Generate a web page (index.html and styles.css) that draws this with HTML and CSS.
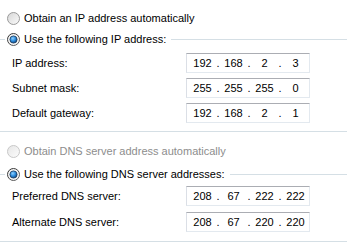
FILE: index.html
```html
<!DOCTYPE html>
<html>
<head>
<meta charset="utf-8">
<link rel="stylesheet" href="styles.css">
</head>
<body>
<svg width="0" height="0" class="defs">
  <defs>
    <linearGradient id="off" x1="0" y1="0" x2="1" y2="1">
      <stop offset="0" stop-color="#d6d6d6"/>
      <stop offset="1" stop-color="#fbfbfb"/>
    </linearGradient>
    <linearGradient id="offdis" x1="0" y1="0" x2="1" y2="1">
      <stop offset="0" stop-color="#e6e6e6"/>
      <stop offset="1" stop-color="#fcfcfc"/>
    </linearGradient>
    <radialGradient id="dot" cx="0.4" cy="0.35" r="0.7">
      <stop offset="0" stop-color="#8fd0ff"/>
      <stop offset="0.5" stop-color="#2f8fe0"/>
      <stop offset="1" stop-color="#0b3f78"/>
    </radialGradient>
    <linearGradient id="ring" x1="0" y1="0" x2="1" y2="1">
      <stop offset="0" stop-color="#2a2a2a"/>
      <stop offset="1" stop-color="#6a6a6a"/>
    </linearGradient>
  </defs>
</svg>
<div class="panel">
  <div class="opt">
    <svg class="radio" viewBox="0 0 13 13"><circle cx="6.5" cy="6.5" r="6" fill="url(#off)" stroke="#9a9a9a"/></svg>
    <span>Obtain an IP address automatically</span>
  </div>
  <div class="opt legend">
    <span class="lead"></span>
    <svg class="radio" viewBox="0 0 13 13"><circle cx="6.5" cy="6.5" r="6" fill="#f4f4f4" stroke="url(#ring)"/><circle cx="6.5" cy="6.5" r="3.6" fill="url(#dot)" stroke="#1c3a5a" stroke-width="0.8"/></svg>
    <span>Use the following IP address:</span>
    <span class="tail"></span>
  </div>
  <div class="fields">
    <div class="field">
      <span class="label">IP address:</span>
      <div class="ip"><span>192</span><i>.</i><span>168</span><i>.</i><span>2</span><i>.</i><span>3</span></div>
    </div>
    <div class="field">
      <span class="label">Subnet mask:</span>
      <div class="ip"><span>255</span><i>.</i><span>255</span><i>.</i><span>255</span><i>.</i><span>0</span></div>
    </div>
    <div class="field">
      <span class="label">Default gateway:</span>
      <div class="ip"><span>192</span><i>.</i><span>168</span><i>.</i><span>2</span><i>.</i><span>1</span></div>
    </div>
  </div>
  <div class="rule"></div>
  <div class="opt disabled">
    <svg class="radio" viewBox="0 0 13 13"><circle cx="6.5" cy="6.5" r="6" fill="url(#offdis)" stroke="#c8c8c8"/></svg>
    <span>Obtain DNS server address automatically</span>
  </div>
  <div class="opt legend second">
    <span class="lead"></span>
    <svg class="radio" viewBox="0 0 13 13"><circle cx="6.5" cy="6.5" r="6" fill="#f4f4f4" stroke="url(#ring)"/><circle cx="6.5" cy="6.5" r="3.6" fill="url(#dot)" stroke="#1c3a5a" stroke-width="0.8"/></svg>
    <span>Use the following DNS server addresses:</span>
    <span class="tail"></span>
  </div>
  <div class="fields dns">
    <div class="field">
      <span class="label">Preferred DNS server:</span>
      <div class="ip"><span>208</span><i>.</i><span>67</span><i>.</i><span>222</span><i>.</i><span>222</span></div>
    </div>
    <div class="field">
      <span class="label">Alternate DNS server:</span>
      <div class="ip"><span>208</span><i>.</i><span>67</span><i>.</i><span>220</span><i>.</i><span>220</span></div>
    </div>
  </div>
  <div class="rule last"></div>
</div>
</body>
</html>
```

FILE: styles.css
```css
html, body {
  margin: 0;
  padding: 0;
  background: #ffffff;
}
.defs {
  position: absolute;
  width: 0;
  height: 0;
}
.panel {
  width: 347px;
  height: 249px;
  font-family: "Liberation Sans", Arial, sans-serif;
  font-size: 11px;
  color: #000;
  display: flex;
  flex-direction: column;
  padding-top: 8px;
  box-sizing: border-box;
}
.opt {
  height: 20px;
  display: flex;
  align-items: center;
  padding-left: 7px;
}
.opt.legend {
  padding-left: 0;
  margin-top: 1px;
}
.opt.legend.second {
  margin-top: 3px;
}
.radio {
  width: 13px;
  height: 13px;
  flex: none;
  margin-right: 4px;
}
.lead {
  width: 5px;
  height: 1px;
  background: #d5dfe5;
  margin-right: 2px;
}
.tail {
  flex: 1;
  height: 1px;
  background: #d5dfe5;
  margin-left: 5px;
}
.disabled {
  color: #8d8d8d;
}
.fields {
  display: flex;
  flex-direction: column;
  gap: 5px;
  margin-top: 4px;
}
.fields.dns {
  margin-top: 2px;
  gap: 6px;
}
.field {
  height: 20px;
  display: flex;
  align-items: center;
  padding-left: 12px;
}
.label {
  width: 174px;
}
.ip {
  width: 124px;
  height: 20px;
  box-sizing: border-box;
  border: 1px solid #dbdfe6;
  border-top-color: #abadb3;
  border-right-color: #e3e9ef;
  border-bottom-color: #e3e9ef;
  display: flex;
  align-items: center;
  padding-left: 3px;
  background: #fff;
}
.ip span {
  width: 25px;
  text-align: center;
}
.ip i {
  font-style: normal;
  width: 6px;
  text-align: center;
}
.rule {
  height: 1px;
  background: #d5dfe5;
  margin-top: 8px;
  margin-bottom: 9px;
}
.rule.last {
  margin-top: 9px;
  margin-bottom: 0;
}
```
